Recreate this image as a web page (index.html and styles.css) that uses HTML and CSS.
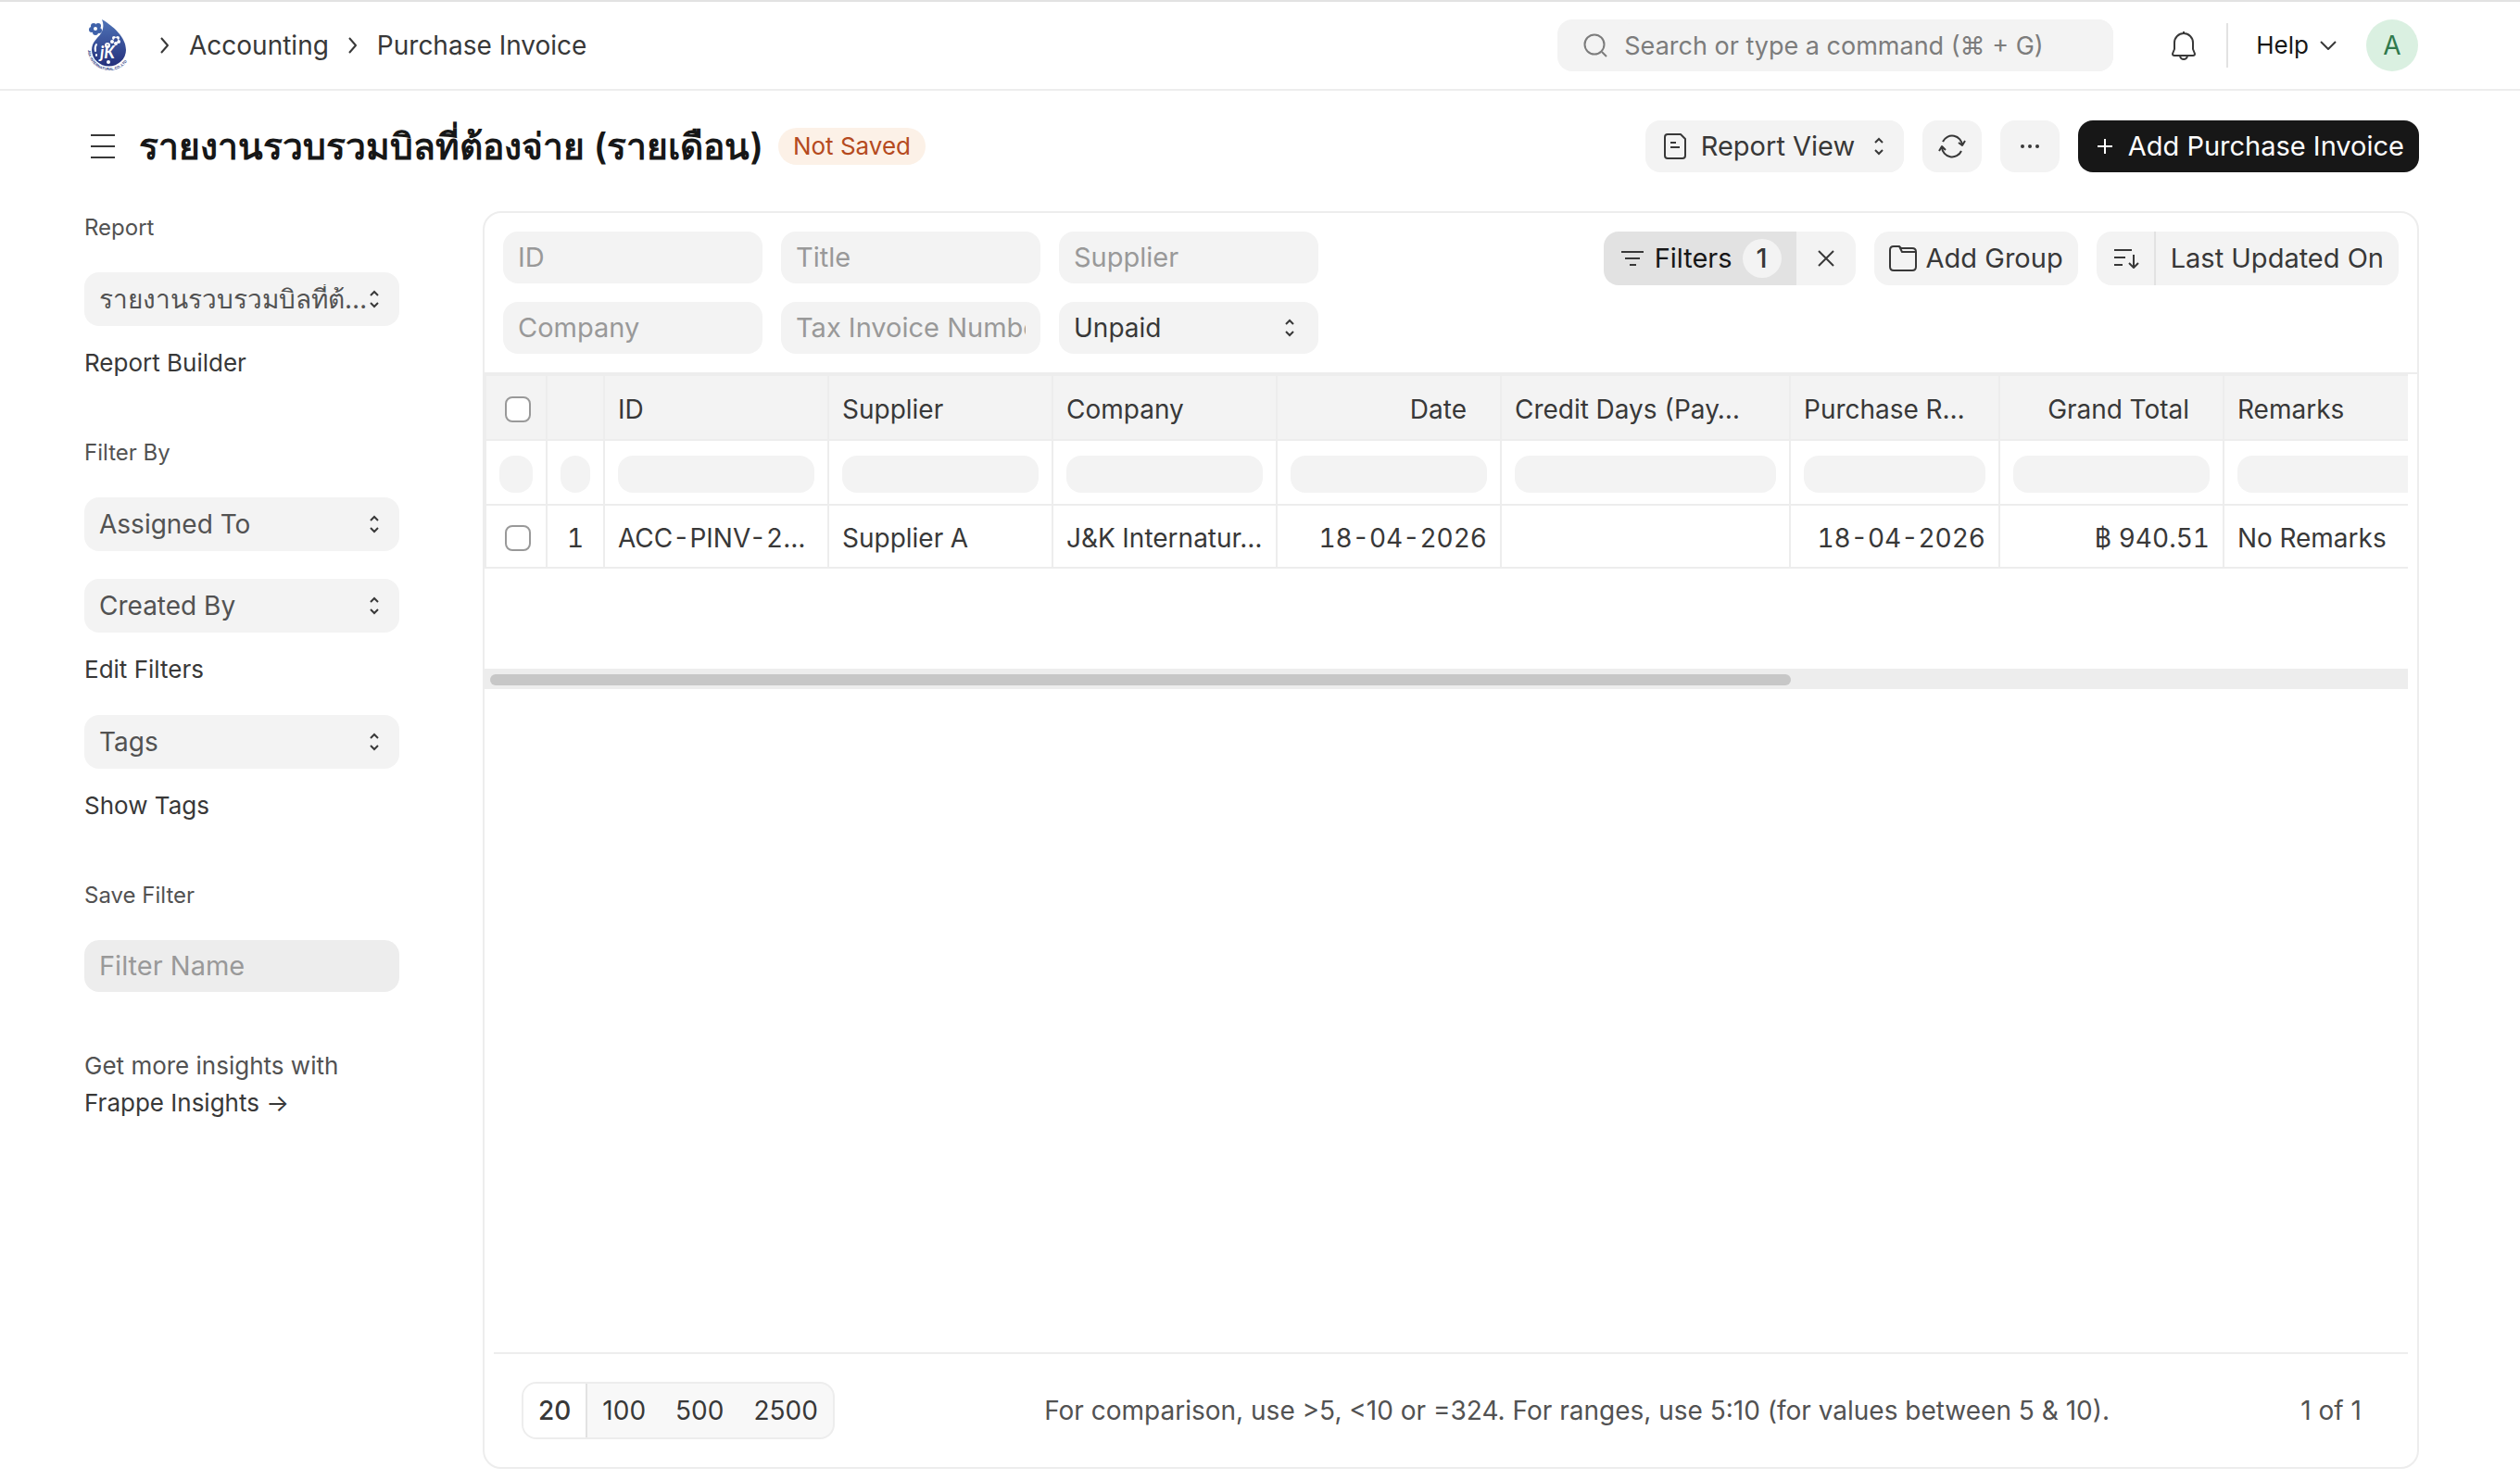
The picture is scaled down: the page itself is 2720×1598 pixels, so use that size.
FILE: index.html
```
<!DOCTYPE html>
<html lang="th">
<head>
    <meta charset="UTF-8">
    <meta name="viewport" content="width=device-width, initial-scale=1.0">
    <title>Purchase Invoice</title>
    <link rel="stylesheet" href="styles.css">
</head>
<body>
    <header class="navbar">
        <a href="#" class="logo" aria-label="Home">
            <svg width="50" height="58" viewBox="0 0 50 58">
                <defs>
                    <linearGradient id="drop" x1="0" y1="0" x2="0" y2="1">
                        <stop offset="0" stop-color="#4f74b8"/>
                        <stop offset="1" stop-color="#25307c"/>
                    </linearGradient>
                    <path id="ring" d="M2 34a23 22 0 0 0 46 0"/>
                </defs>
                <path fill="url(#drop)" d="M17 1c12 7 26 19 26 33a18 17 0 0 1-37 0c0-9 6-12 10-18 3-5 3-10 1-15z"/>
                <g fill="#3f62aa">
                    <circle cx="8" cy="8" r="3"/><circle cx="13" cy="8" r="3"/><circle cx="14" cy="13" r="3"/><circle cx="10" cy="15" r="3"/><circle cx="6" cy="12" r="3"/><circle cx="10" cy="11" r="4"/>
                </g>
                <circle cx="10" cy="11" r="2" fill="#fff"/>
                <g fill="#fff">
                    <circle cx="30" cy="21" r="2"/><circle cx="34" cy="21" r="2"/><circle cx="35" cy="25" r="2"/><circle cx="32" cy="27" r="2"/><circle cx="28" cy="25" r="2"/>
                    <circle cx="23" cy="29" r="3"/><circle cx="24" cy="47" r="2"/>
                </g>
                <circle cx="32" cy="23" r="2" fill="#3a4f98"/>
                <circle cx="23" cy="29" r="1" fill="#3a4f98"/>
                <path d="M11 28q-2 3-1 7M11 39v1" fill="none" stroke="#fff" stroke-width="2" stroke-linecap="round"/>
                <text x="15" y="43" class="logo-initials">jK</text>
                <text class="logo-ring"><textPath href="#ring">J&amp;K INTERNATURAL.CO.,LTD</textPath></text>
            </svg>
        </a>
        <nav class="breadcrumb">
            <svg width="10" height="18" viewBox="0 0 10 18"><path d="M1 1l7 8-7 8"/></svg>
            <a href="#">Accounting</a>
            <svg width="10" height="18" viewBox="0 0 10 18"><path d="M1 1l7 8-7 8"/></svg>
            <a href="#">Purchase Invoice</a>
        </nav>
        <div class="search">
            <svg width="26" height="26" viewBox="0 0 26 26"><circle cx="12" cy="12" r="10.5"/><path d="M20 20l5 5"/></svg>
            <input type="text" aria-label="Search" placeholder="Search or type a command (⌘ + G)">
        </div>
        <button class="bell" aria-label="Notifications">
            <svg width="28" height="32" viewBox="0 0 28 32"><path d="M14 1v2M4 20v-7a10 10 0 0 1 20 0v7l2 5q0 2-2 2H4q-2 0-2-2zM10 28q1 3 4 3t4-3"/></svg>
        </button>
        <button class="help">Help <svg width="18" height="12" viewBox="0 0 18 12"><path d="M1 2l8 8 8-8"/></svg></button>
        <button class="avatar">A</button>
    </header>

    <div class="page-head">
        <button class="menu" aria-label="Toggle sidebar">
            <svg width="28" height="28" viewBox="0 0 28 28"><path d="M1 2h26M1 14h26M1 26h26"/></svg>
        </button>
        <h1>รายงานรวบรวมบิลที่ต้องจ่าย (รายเดือน)</h1>
        <span class="badge">Not Saved</span>
        <div class="actions">
            <div class="view-switch">
                <svg width="24" height="28" viewBox="0 0 24 28"><path d="M4 1h14l5 5v18q0 3-3 3H4q-3 0-3-3V4q0-3 3-3zM7 10h6M7 15h10"/></svg>
                <select aria-label="View"><option>Report View</option></select>
            </div>
            <button class="btn icon-btn" aria-label="Refresh">
                <svg width="30" height="26" viewBox="0 0 30 26"><path d="M5 8a11 11 0 0 1 21 4M25 18a11 11 0 0 1-21-4M22 9l4 3 3-5M1 18l3-5 4 4"/></svg>
            </button>
            <button class="btn icon-btn" aria-label="Menu">
                <svg class="dots" width="20" height="4" viewBox="0 0 20 4"><circle cx="2" cy="2" r="2"/><circle cx="10" cy="2" r="2"/><circle cx="18" cy="2" r="2"/></svg>
            </button>
            <button class="btn primary">
                <svg width="18" height="18" viewBox="0 0 18 18"><path d="M9 1v16M1 9h16"/></svg>
                Add Purchase Invoice
            </button>
        </div>
    </div>

    <div class="layout">
        <aside class="sidebar">
            <section>
                <label for="report">Report</label>
                <select id="report"><option>รายงานรวบรวมบิลที่ต้องจ่าย (รายเดือน)</option></select>
                <a href="#">Report Builder</a>
            </section>
            <section>
                <label for="assigned">Filter By</label>
                <select id="assigned"><option>Assigned To</option></select>
                <select aria-label="Created By" class="stacked"><option>Created By</option></select>
                <a href="#">Edit Filters</a>
                <select aria-label="Tags" class="stacked"><option>Tags</option></select>
                <a href="#">Show Tags</a>
            </section>
            <section>
                <label for="filterName">Save Filter</label>
                <input type="text" id="filterName" placeholder="Filter Name">
            </section>
            <p>Get more insights with<br><a href="#">Frappe Insights →</a></p>
        </aside>

        <main class="card">
            <div class="toolbar">
                <form class="fields">
                    <input type="text" aria-label="ID" placeholder="ID">
                    <input type="text" aria-label="Title" placeholder="Title">
                    <input type="text" aria-label="Supplier" placeholder="Supplier">
                    <input type="text" aria-label="Company" placeholder="Company">
                    <input type="text" aria-label="Tax Invoice Number" placeholder="Tax Invoice Number">
                    <select aria-label="Status"><option>Unpaid</option></select>
                </form>
                <div class="btn-group">
                    <button class="btn filters">
                        <svg width="26" height="18" viewBox="0 0 26 18"><path d="M1 2h24M5 9h16M10 16h7"/></svg>
                        Filters <span class="count">1</span>
                    </button>
                    <button class="btn clear" aria-label="Clear filters">
                        <svg width="18" height="18" viewBox="0 0 18 18"><path d="M1 1l16 16M17 1L1 17"/></svg>
                    </button>
                </div>
                <button class="btn add-group">
                    <svg width="30" height="28" viewBox="0 0 30 28"><path d="M11 1H5Q1 1 1 5v18q0 4 4 4h20q4 0 4-4V7q0-4-4-4H13l-2-2 3 6h14"/></svg>
                    Add Group
                </button>
                <div class="btn-group">
                    <button class="btn sort" aria-label="Sort direction">
                        <svg width="28" height="24" viewBox="0 0 28 24"><path d="M1 3h19M1 11h12M1 19h9M22 8v14M17 17l5 5 5-5"/></svg>
                    </button>
                    <button class="btn">Last Updated On</button>
                </div>
            </div>

            <div class="table-wrap">
                <table>
                    <colgroup>
                        <col class="c-check"><col class="c-num"><col><col><col><col><col class="c-days"><col class="c-purchase"><col><col>
                    </colgroup>
                    <thead>
                        <tr>
                            <th><input type="checkbox" aria-label="Select all"></th>
                            <th></th>
                            <th>ID</th>
                            <th>Supplier</th>
                            <th>Company</th>
                            <th class="right">Date</th>
                            <th>Credit Days (Pay…</th>
                            <th>Purchase R…</th>
                            <th class="right">Grand Total</th>
                            <th>Remarks</th>
                        </tr>
                        <tr class="filter-row">
                            <td><input type="text" aria-label="Filter selection"></td>
                            <td><input type="text" aria-label="Filter row number"></td>
                            <td><input type="text" aria-label="Filter ID"></td>
                            <td><input type="text" aria-label="Filter supplier"></td>
                            <td><input type="text" aria-label="Filter company"></td>
                            <td><input type="text" aria-label="Filter date"></td>
                            <td><input type="text" aria-label="Filter credit days"></td>
                            <td><input type="text" aria-label="Filter purchase date"></td>
                            <td><input type="text" aria-label="Filter grand total"></td>
                            <td><input type="text" aria-label="Filter remarks"></td>
                        </tr>
                    </thead>
                    <tbody>
                        <tr>
                            <td><input type="checkbox" aria-label="Select row 1"></td>
                            <td class="center">1</td>
                            <td>ACC-PINV-2…</td>
                            <td>Supplier A</td>
                            <td>J&amp;K Internatur…</td>
                            <td class="right">18-04-2026</td>
                            <td></td>
                            <td class="right">18-04-2026</td>
                            <td class="right">฿ 940.51</td>
                            <td>No Remarks</td>
                        </tr>
                    </tbody>
                </table>
                <div class="scroll-track"><div class="scroll-thumb"></div></div>
            </div>

            <footer class="card-foot">
                <div class="paging">
                    <button class="active">20</button>
                    <button>100</button>
                    <button>500</button>
                    <button>2500</button>
                </div>
                <span class="hint">For comparison, use &gt;5, &lt;10 or =324. For ranges, use 5:10 (for values between 5 &amp; 10).</span>
                <span>1 of 1</span>
            </footer>
        </main>
    </div>
</body>
</html>
```
FILE: styles.css
```
* {
    box-sizing: border-box;
}

body {
    display: flex;
    flex-direction: column;
    min-height: 100vh;
    margin: 0;
    border-top: 2px solid #e2e2e2;
    background-color: #fff;
    font-family: Inter, "Noto Sans", sans-serif;
    font-size: 28px;
    line-height: 32px;
    font-optical-sizing: none;
    color: #383838;
}

a {
    color: inherit;
    text-decoration: none;
}

button, input, select {
    margin: 0;
    border: none;
    font: inherit;
    color: inherit;
}

button {
    display: flex;
    align-items: center;
    padding: 0;
    background: none;
    cursor: pointer;
}

svg {
    flex: none;
    fill: none;
    stroke: #383838;
    stroke-width: 2;
    stroke-linejoin: round;
}

input[type="text"], select {
    width: 100%;
    height: 56px;
    padding: 0 16px;
    border-radius: 16px;
    background-color: #f3f3f3;
}

input::placeholder {
    font-size: 29px;
    color: #999;
    opacity: 1;
}

select {
    appearance: none;
    background-image: url("data:image/svg+xml,%3Csvg xmlns='http://www.w3.org/2000/svg' width='10' height='20' fill='none' stroke='%23383838' stroke-width='2'%3E%3Cpath d='M1 6l4-4 4 4M1 14l4 4 4-4'/%3E%3C/svg%3E");
    background-repeat: no-repeat;
    background-position: right 22px center;
    text-overflow: ellipsis;
}

/* navbar */
.navbar {
    display: flex;
    align-items: center;
    height: 96px;
    padding: 0 110px 0 93px;
    border-bottom: 2px solid #ededed;
}

.logo {
    display: flex;
    margin-right: 30px;
}

.logo svg {
    stroke: none;
}

.logo-initials {
    font: italic bold 18px Lato, sans-serif;
    fill: #fff;
}

.logo-ring {
    font: bold 4px "Liberation Sans", sans-serif;
    fill: #2c3a84;
}

.breadcrumb {
    display: flex;
    align-items: center;
    gap: 21px;
}

.search {
    display: flex;
    align-items: center;
    gap: 18px;
    width: 600px;
    height: 56px;
    margin-left: auto;
    padding-left: 28px;
    border-radius: 16px;
    background-color: #f3f3f3;
}

.search svg {
    stroke: #7c7c7c;
}

.search input {
    padding: 0;
}

.search input::placeholder {
    font-size: 27px;
    color: #7c7c7c;
}

.bell {
    height: 48px;
    margin-left: 62px;
    padding-right: 32px;
    border-right: 2px solid #e2e2e2;
}

.help {
    gap: 12px;
    margin: 0 32px 0 30px;
    font-size: 26px;
    color: #171717;
}

.avatar {
    justify-content: center;
    width: 56px;
    height: 56px;
    border-radius: 50%;
    background-color: #daf0e1;
    color: #30794c;
}

/* page head */
.page-head {
    display: flex;
    align-items: center;
    height: 120px;
    padding: 0 109px 0 97px;
}

h1 {
    margin: 0 16px 0 25px;
    font-size: 39px;
    line-height: 48px;
    font-weight: 600;
    color: #171717;
    white-space: nowrap;
}

.badge {
    padding: 4px 16px;
    border-radius: 20px;
    background-color: #fcf1e7;
    font-size: 26px;
    color: #b54a20;
    white-space: nowrap;
}

.actions {
    display: flex;
    gap: 20px;
    margin-left: auto;
    font-size: 29px;
}

.btn {
    height: 58px;
    padding: 0 16px;
    border-radius: 16px;
    background-color: #f3f3f3;
    font-size: 29px;
    white-space: nowrap;
}

.actions .btn {
    height: 56px;
}

.view-switch {
    display: flex;
    align-items: center;
    padding-left: 20px;
    border-radius: 16px;
    background-color: #f3f3f3;
}

.view-switch select {
    padding: 0 52px 0 16px;
}

.icon-btn {
    justify-content: center;
    width: 64px;
}

.dots {
    fill: #383838;
    stroke: none;
}

.actions .primary {
    gap: 16px;
    padding: 0 16px 0 20px;
    background-color: #171717;
    color: #fff;
}

.primary svg {
    stroke: #fff;
}

/* sidebar and card */
.layout {
    display: flex;
    flex: 1;
    gap: 90px;
    padding: 10px 109px 12px 91px;
}

.sidebar {
    flex: none;
    width: 340px;
    padding-top: 2px;
    font-size: 26px;
    color: #525252;
}

.sidebar section {
    margin-bottom: 65px;
}

.sidebar section:last-of-type {
    margin-bottom: 60px;
}

.sidebar label {
    display: block;
    margin-bottom: 32px;
    font-size: 24px;
}

.sidebar select {
    display: block;
    height: 58px;
    padding-right: 28px;
    margin-bottom: 24px;
    font-size: 28px;
}

.sidebar .stacked {
    margin-top: 30px;
}

.sidebar a + .stacked {
    margin-top: 33px;
}

.sidebar section a {
    display: block;
    color: #383838;
}

.sidebar input[type="text"] {
    display: block;
    background-color: #ededed;
    font-size: 28px;
}

.sidebar p {
    margin: 0;
    line-height: 40px;
}

.sidebar p a {
    color: #383838;
}

.card {
    display: flex;
    flex: 1;
    flex-direction: column;
    min-width: 0;
    border: 2px solid #ededed;
    border-radius: 20px;
}

.toolbar {
    display: flex;
    align-items: flex-start;
    gap: 20px;
    padding: 20px;
    border-bottom: 2px solid #ededed;
}

.fields {
    display: grid;
    grid-template-columns: repeat(3, 280px);
    gap: 20px;
    margin-right: auto;
}

.fields select {
    background-position: right 26px center;
}

.btn-group {
    display: flex;
}

.btn-group .btn:first-child {
    border-radius: 16px 0 0 16px;
}

.btn-group .btn:last-child {
    border-radius: 0 16px 16px 0;
}

.btn-group .filters {
    gap: 11px;
    padding: 0 16px 0 18px;
    background-color: #e2e2e2;
    color: #171717;
}

.count {
    width: 42px;
    border-radius: 50%;
    background-color: #f3f3f3;
    line-height: 42px;
    font-weight: 500;
    text-align: center;
    color: #383838;
}

.clear {
    justify-content: center;
    width: 64px;
}

.add-group {
    gap: 10px;
}

.btn-group .sort {
    width: 64px;
    padding: 0 18px;
    border-right: 2px solid #e2e2e2;
}

.table-wrap {
    margin-right: 10px;
    overflow: hidden;
}

table {
    width: 2120px;
    border-top: 2px solid #ededed;
    border-left: 2px solid #ededed;
    border-spacing: 0;
    table-layout: fixed;
}

col {
    width: 242px;
}

.c-check {
    width: 66px;
}

.c-num {
    width: 62px;
}

.c-days {
    width: 312px;
}

.c-purchase {
    width: 226px;
}

th, td {
    height: 70px;
    padding: 3px 14px 0;
    border-right: 2px solid #ededed;
    border-bottom: 2px solid #ededed;
    font-weight: 400;
    font-variant-numeric: tabular-nums;
    text-align: left;
    white-space: nowrap;
    overflow: hidden;
}

th {
    background-color: #f3f3f3;
}

.right {
    text-align: right;
}

th.right {
    padding-right: 36px;
}

.center {
    text-align: center;
}

tbody td {
    height: 68px;
}

.filter-row input[type="text"] {
    display: block;
    height: 40px;
    padding: 0 10px;
}

input[type="checkbox"] {
    appearance: none;
    display: block;
    width: 28px;
    height: 28px;
    margin-left: 6px;
    border: 2px solid #999;
    border-radius: 8px;
    background-color: #fff;
}

.scroll-track {
    margin-top: 108px;
    padding: 6px 6px 4px;
    background-color: #ededed;
}

.scroll-thumb {
    width: 68%;
    height: 12px;
    border-radius: 6px;
    background-color: #c7c7c7;
}

.card-foot {
    display: flex;
    align-items: center;
    justify-content: space-between;
    height: 124px;
    margin: auto 10px 0;
    padding: 0 50px 0 30px;
    border-top: 2px solid #ededed;
    color: #525252;
}

.paging {
    display: flex;
    height: 62px;
    border: 2px solid #ededed;
    border-radius: 16px;
    background-color: #f8f8f8;
    overflow: hidden;
}

.paging button {
    padding: 0 16px;
    color: #383838;
}

.paging .active {
    border-right: 2px solid #e2e2e2;
    background-color: #fff;
    font-weight: 500;
}

.hint {
    margin-left: 20px;
}
```
